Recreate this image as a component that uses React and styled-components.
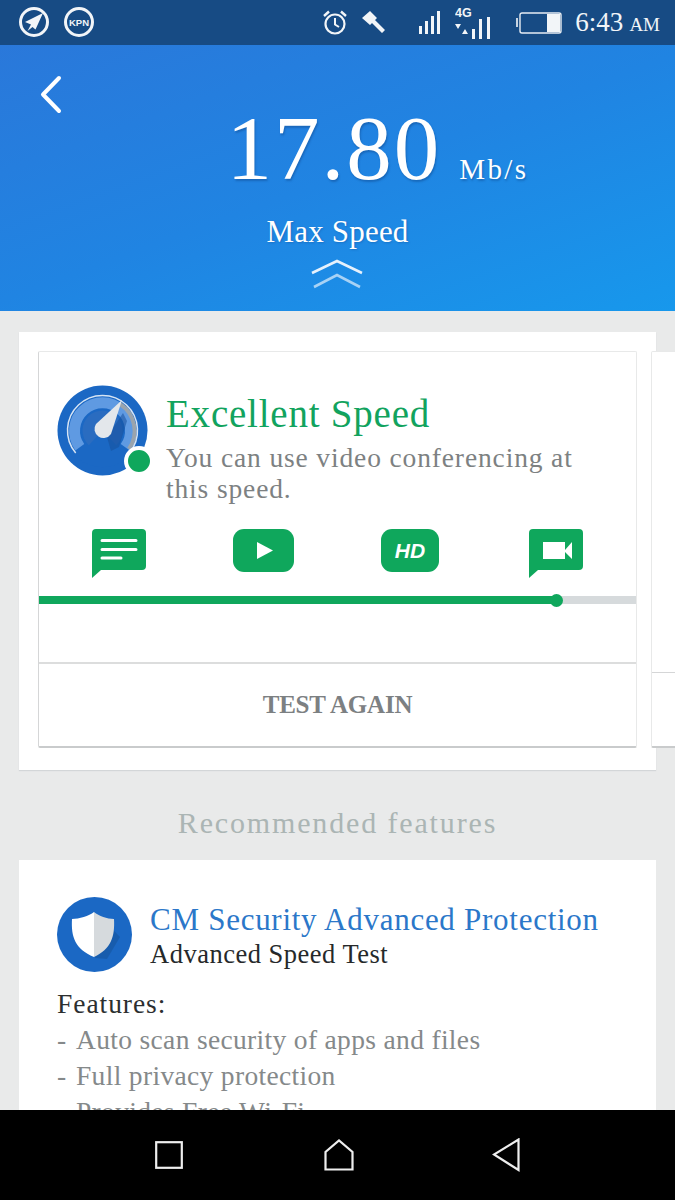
import React from "react";
import styled, { createGlobalStyle } from "styled-components";

const Global = createGlobalStyle`
  html, body { margin: 0; padding: 0; background: #000; }
  * { box-sizing: border-box; }
`;
const SERIF = `"Liberation Serif", "DejaVu Serif", serif`;
const Screen = styled.div`
  width: 675px; height: 1200px; overflow: hidden; display: flex; flex-direction: column;
  font-family: ${SERIF}; background: #e9eaea;
`;
const StatusBar = styled.div`
  height: 45px; flex: none; background: #174b84; display: flex; align-items: center;
  padding: 0 15px 0 18px; color: #f2f5f8;
`;
const StatusLeft = styled.div`display: flex; gap: 13px; align-items: center; flex: 1; margin-top: -1px;`;
const StatusRight = styled.div`display: flex; align-items: center;`;
const Clock = styled.div`
  font-size: 27px; margin-left: 13px; margin-top: -1px; white-space: nowrap;
  small { font-size: 19px; margin-left: 6px; letter-spacing: 0; }
`;
const Header = styled.header`
  height: 266px; flex: none; background: linear-gradient(160deg, #2a78da 0%, #2084e2 50%, #1798ec 100%);
  display: flex; flex-direction: column; align-items: center; color: #fff; position: relative;
`;
const Back = styled.svg`position: absolute; left: 38px; top: 30px;`;
const Speed = styled.div`
  display: flex; align-items: baseline; margin-top: 60px; margin-left: 80px; height: 88px; line-height: 88px;
  text-shadow: 1px 2px 2px rgba(15,70,140,.45);
`;
const SpeedValue = styled.span`font-size: 91px; letter-spacing: 2px;`;
const SpeedUnit = styled.span`font-size: 29px; margin-left: 18px; letter-spacing: 2.4px;`;
const SpeedLabel = styled.div`
  font-size: 31px; margin-top: 21px; line-height: 36px; letter-spacing: .2px;
  text-shadow: 1px 1px 2px rgba(15,70,140,.35);
`;
const Chevrons = styled.svg`margin-top: 9px; margin-right: 2px;`;
const Content = styled.main`flex: 1; min-height: 0; overflow: hidden; padding: 21px 19px 0;`;
const Panel = styled.section`
  background: #fff; height: 438px; padding: 19px; box-shadow: 0 1px 1px #d3d6d8;
`;
const Carousel = styled.div`display: flex; gap: 14px; margin-right: -40px; height: 397px;`;
const SpeedCard = styled.article`
  width: 599px; flex: none; border: 1px solid #e8e9e9; border-bottom: 2px solid #c9cbcc; border-left-color: #d5d6d7; border-radius: 2px;
  display: flex; flex-direction: column; background: #fff;
`;
const PeekCard = styled.div`
  width: 60px; flex: none; border: 1px solid #e8e9e9; border-bottom: 2px solid #c9cbcc; border-radius: 2px; background: #fff;
  &::after { content: ""; display: block; margin-top: 320px; border-top: 1px solid #d5d6d7; }
`;
const Result = styled.div`display: flex; padding: 33px 0 0 18px; height: 177px; gap: 18px;`;
const Gauge = styled.div`position: relative; width: 91px; height: 91px; flex: none;`;
const Dot = styled.span`
  position: absolute; left: 67px; top: 61px; width: 30px; height: 30px; border-radius: 50%;
  background: #0fa75c; border: 4px solid #fff;
`;
const ResultText = styled.div`padding-top: 7px;`;
const ResultTitle = styled.h2`
  margin: 0; font-weight: 400; font-size: 39px; line-height: 44px; color: #12a35e; letter-spacing: .78px; white-space: nowrap;
`;
const ResultDesc = styled.p`
  margin: 6px 0 0; font-size: 27.5px; line-height: 31px; color: #7d8182; letter-spacing: .86px; width: 440px;
`;
const Apps = styled.div`
  display: flex; height: 60px; padding-left: 53px; gap: 87px; align-items: flex-start;
  & > svg:last-child { margin-left: 3px; }
`;
const Progress = styled.div`height: 8px; margin-top: 7px; background: #d6dadc; position: relative; flex: none;`;
const ProgressFill = styled.div`height: 100%; background: #0fa75c;`;
const Knob = styled.span`
  position: absolute; top: -2.5px; width: 13px; height: 13px; margin-left: -7px; border-radius: 50%; background: #0fa75c;
`;
const AgainRow = styled.div`
  margin-top: auto; height: 84px; flex: none; border-top: 2px solid #dcdddd; display: flex; align-items: center; justify-content: center;
  font-size: 25px; font-weight: 700; color: #7c8082; letter-spacing: -.2px;
`;
const SectionTitle = styled.h3`
  margin: 0; height: 90px; line-height: 106px; text-align: center; font-weight: 400; font-size: 30px; color: #abb5b4; letter-spacing: 1.85px;
`;
const Feature = styled.section`background: #fff; height: 400px; padding: 37px 38px;`;
const FeatureHead = styled.div`display: flex; gap: 18px; height: 75px;`;
const FeatureTitle = styled.h4`
  margin: 5px 0 0; font-weight: 400; font-size: 31px; line-height: 36px; color: #2b77c9; letter-spacing: .73px; white-space: nowrap;
`;
const FeatureSub = styled.div`font-size: 26.5px; line-height: 32px; color: #26292a; letter-spacing: .5px;`;
const FeaturesLabel = styled.div`font-size: 27.5px; line-height: 36px; color: #2c2f30; letter-spacing: .95px; margin-top: 14px;`;
const FeatureList = styled.ul`list-style: none; margin: 0; padding: 0;`;
const FeatureItem = styled.li`
  font-size: 27.5px; line-height: 36px; color: #85898a; letter-spacing: .33px; white-space: nowrap; display: flex;
  span { width: 19px; flex: none; }
`;
const NavBar = styled.nav`
  height: 90px; flex: none; background: #000; display: flex; align-items: center; padding: 0 0 0 155px; gap: 141px; position: relative; z-index: 1;
  & > svg:last-child { margin-left: -3px; }
`;

const GREEN = "#0fa75c";
const Bubble = ({ children }) => (
  <svg width="54" height="49" viewBox="0 0 54 49">
    <path d="M4 0H50a4 4 0 0 1 4 4V37a4 4 0 0 1-4 4H9L0 49V4A4 4 0 0 1 4 0Z" fill={GREEN} />
    {children}
  </svg>
);
const Rounded = ({ children, w }) => (
  <svg width={w} height="44" viewBox={`0 0 ${w} 44`}>
    <rect x="0" y="0" width={w} height="43" rx="11" fill={GREEN} />
    {children}
  </svg>
);

const App = () => (
  <Screen>
    <Global />
    <StatusBar>
      <StatusLeft>
        <svg width="32" height="32" viewBox="0 0 32 32">
          <circle cx="16" cy="16" r="13.500" fill="none" stroke="#f2f5f8" strokeWidth="3" />
          <path d="M25 7 7 16l6 2.500L9.500 25l5-4 3 2.500Z" fill="#f2f5f8" />
        </svg>
        <svg width="32" height="32" viewBox="0 0 32 32">
          <circle cx="16" cy="16" r="13.500" fill="none" stroke="#f2f5f8" strokeWidth="3" />
          <text x="16" y="19.500" textAnchor="middle" fontFamily="Liberation Sans" fontWeight="700" fontSize="9.500" fill="#f2f5f8">KPN</text>
        </svg>
      </StatusLeft>
      <StatusRight>
        <svg width="26" height="28" viewBox="0 0 26 28" style={{ marginRight: 13 }}>
          <circle cx="13" cy="15" r="9.500" fill="none" stroke="#f2f5f8" strokeWidth="2.200" />
          <path d="M13 9v6.500l4 2.500" fill="none" stroke="#f2f5f8" strokeWidth="2" />
          <path d="M2 7 7 2.500M24 7l-5-4.500" stroke="#f2f5f8" strokeWidth="2.400" />
        </svg>
        <svg width="26" height="26" viewBox="0 0 26 26" style={{ marginRight: 32 }}>
          <path d="M1 8 9 1l7 7-7 7ZM11 13l3-3 10 10-3 3Z" fill="#f2f5f8" />
        </svg>
        <svg width="21" height="24" viewBox="0 0 21 24" style={{ marginRight: 15 }}>
          <path d="M0 15h3v8H0ZM6 10h3v13H6ZM12 5h3v18h-3ZM18 0h3v23h-3Z" fill="#f2f5f8" />
        </svg>
        <svg width="37" height="34" viewBox="0 0 37 34" style={{ marginRight: 24 }}>
          <text x="0" y="11" fontFamily="Liberation Sans" fontWeight="700" fontSize="12.500" fill="#f2f5f8">4G</text>
          <path d="M0 18h6l-3 5ZM7 28H13L10 23ZM17 23h3v10h-3ZM24 13h3v20h-3ZM32 11h3v22h-3Z" fill="#f2f5f8" />
        </svg>
        <svg width="46" height="22" viewBox="0 0 46 22">
          <rect x="0" y="6" width="2" height="9" fill="#c8d4e2" />
          <rect x="4" y="1" width="41" height="20" rx="2" fill="none" stroke="#e8edf3" strokeWidth="1.400" />
          <rect x="31" y="2" width="13" height="18" fill="#f2f5f8" />
        </svg>
        <Clock>6:43<small>AM</small></Clock>
      </StatusRight>
    </StatusBar>
    <Header>
      <Back width="28" height="40" viewBox="0 0 28 40">
        <path d="M21 3 5 19.500 21 36" fill="none" stroke="#fff" strokeWidth="4" strokeLinecap="round" strokeLinejoin="round" />
      </Back>
      <Speed>
        <SpeedValue>17.80</SpeedValue>
        <SpeedUnit>Mb/s</SpeedUnit>
      </Speed>
      <SpeedLabel>Max Speed</SpeedLabel>
      <Chevrons width="54" height="32" viewBox="0 0 54 32">
        <path d="M2 14 27 2l25 12" fill="none" stroke="#e6f1fc" strokeWidth="2.600" />
        <path d="M4 28 27 16l23 12" fill="none" stroke="#a8d2f5" strokeWidth="2.600" />
      </Chevrons>
    </Header>
    <Content>
      <Panel>
        <Carousel>
          <SpeedCard>
            <Result>
              <Gauge>
                <svg width="91" height="91" viewBox="0 0 91 91">
                  <circle cx="45.500" cy="45.500" r="45" fill="#1b68c4" />
                  <path d="M22.800 62.200A28 28 0 1 1 68.200 62.200" fill="none" stroke="#5f9ae2" strokeWidth="11" />
                  <path d="M63 19A32 32 0 0 1 72 64" fill="none" stroke="#9aa4ad" strokeWidth="4" />
                  <path d="M18.700 68A35 35 0 1 1 72.300 68" fill="none" stroke="#d6e4f4" strokeWidth="1.500" />
                  <circle cx="45.500" cy="45.500" r="20" fill="#2a6cc0" />
                  <path d="M45.500 45.500 20 73A40 40 0 0 0 71 73Z" fill="#1b68c4" />
                  <path d="M50 52 66 28 70 36 62 62 54 66Z" fill="#15509c" opacity=".55" />
                  <path d="M65 15 54 49A9 9 0 1 1 39 39Z" fill="#e3e7eb" />
                </svg>
                <Dot />
              </Gauge>
              <ResultText>
                <ResultTitle>Excellent Speed</ResultTitle>
                <ResultDesc>You can use video conferencing at this speed.</ResultDesc>
              </ResultText>
            </Result>
            <Apps>
              <Bubble>
                <path d="M10 11.500H44M10 20.500H44M10 29H29" stroke="#fff" strokeWidth="3" strokeLinecap="round" />
              </Bubble>
              <Rounded w="61">
                <path d="M24 13 40 21.500 24 30Z" fill="#fff" />
              </Rounded>
              <Rounded w="58">
                <text x="29" y="29" textAnchor="middle" fontFamily="Liberation Sans" fontWeight="700" fontStyle="italic" fontSize="21" fill="#fff">HD</text>
              </Rounded>
              <Bubble>
                <path d="M14 13H36V30H14ZM36 21 43 13V30L36 23Z" fill="#fff" />
              </Bubble>
            </Apps>
            <Progress>
              <ProgressFill style={{ width: "86.500%" }} />
              <Knob style={{ left: "86.700%" }} />
            </Progress>
            <AgainRow>TEST AGAIN</AgainRow>
          </SpeedCard>
          <PeekCard />
        </Carousel>
      </Panel>
      <SectionTitle>Recommended features</SectionTitle>
      <Feature>
        <FeatureHead>
          <svg width="75" height="75" viewBox="0 0 75 75" style={{ flex: "none" }}>
            <circle cx="37.500" cy="37.500" r="37.500" fill="#1b68c4" />
            <path d="M42 18 63 40 50 62 38 61Z" fill="#15559f" opacity=".6" />
            <path d="M37 15C42 19 50 22 57 22C58 40 54 52 37 60Z" fill="#d6dadd" />
            <path d="M37 15C32 19 22 22 15 22C14 40 18 52 37 60Z" fill="#fff" />
          </svg>
          <div>
            <FeatureTitle>CM Security Advanced Protection</FeatureTitle>
            <FeatureSub>Advanced Speed Test</FeatureSub>
          </div>
        </FeatureHead>
        <FeaturesLabel>Features:</FeaturesLabel>
        <FeatureList>
          <FeatureItem><span>-</span>Auto scan security of apps and files</FeatureItem>
          <FeatureItem><span>-</span>Full privacy protection</FeatureItem>
          <FeatureItem><span>-</span>Provides Free Wi-Fi</FeatureItem>
        </FeatureList>
      </Feature>
    </Content>
    <NavBar>
      <svg width="28" height="28" viewBox="0 0 28 28">
        <rect x="1.200" y="1.200" width="25.600" height="25.600" fill="none" stroke="#eee" strokeWidth="2.200" />
      </svg>
      <svg width="30" height="32" viewBox="0 0 30 32">
        <path d="M1.500 30.500V13L15 1.500 28.500 13V30.500Z" fill="none" stroke="#eee" strokeWidth="2.200" />
      </svg>
      <svg width="28" height="34" viewBox="0 0 28 34">
        <path d="M26.500 1.500V32L2 16.500Z" fill="none" stroke="#eee" strokeWidth="2.200" />
      </svg>
    </NavBar>
  </Screen>
);

export default App;
